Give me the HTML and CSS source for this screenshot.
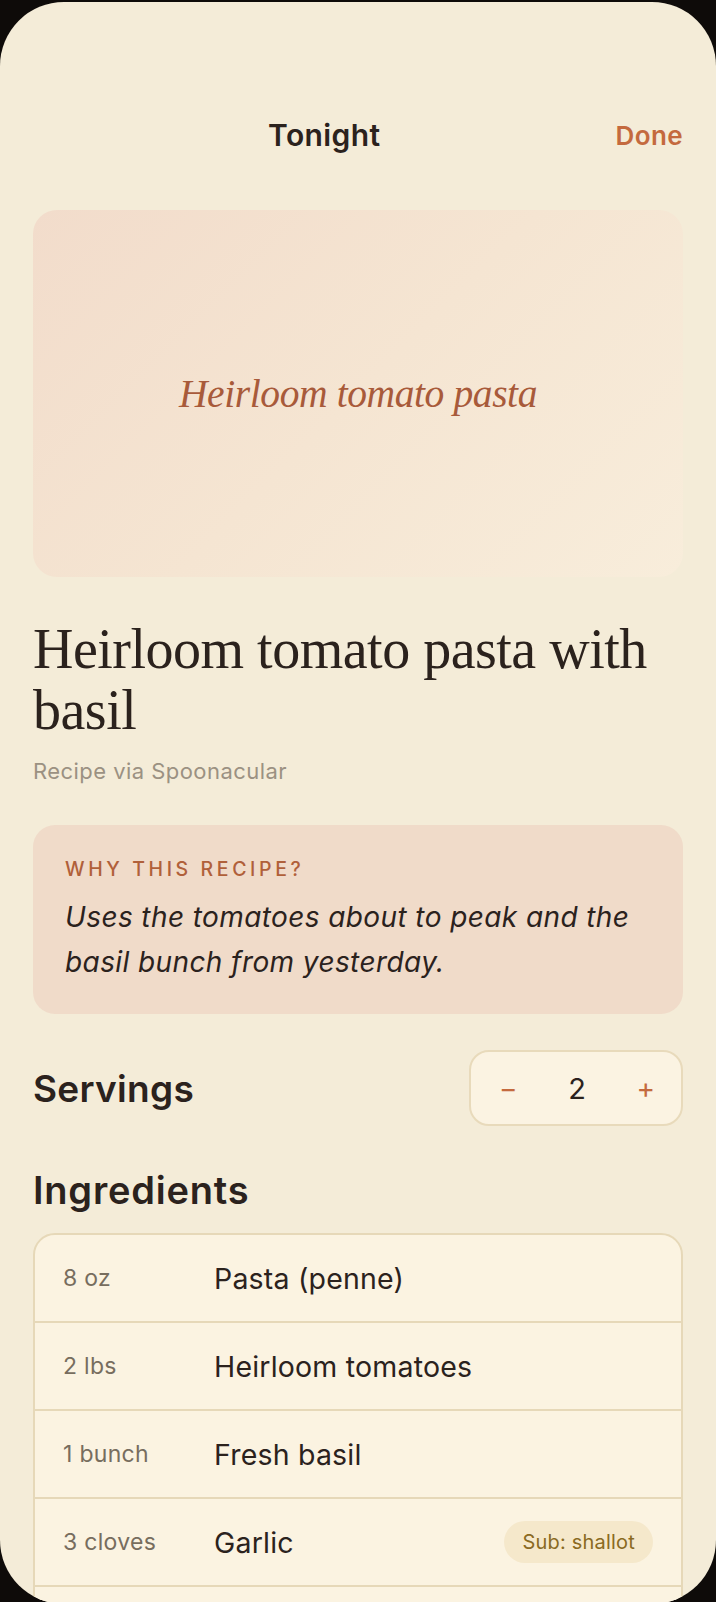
FILE: index.html
```html
<!DOCTYPE html>
<html lang="en">
<head>
  <meta charset="UTF-8" />
  <meta name="viewport" content="width=device-width, initial-scale=1.0">
  <title>Tonight</title>
  <link rel="stylesheet" href="styles.css">
</head>
<body>
  <div class="screen">

    <!-- Top bar -->
    <div class="topbar">
      <div class="topbar-title">Tonight</div>
      <button class="done-btn">Done</button>
    </div>

    <!-- Hero -->
    <div class="hero">
      <span class="hero-label">Heirloom tomato pasta</span>
    </div>

    <h1 class="recipe-title">Heirloom tomato pasta with basil</h1>
    <div class="recipe-source">Recipe via Spoonacular</div>

    <!-- Why card -->
    <div class="why-card">
      <div class="why-label">Why this recipe?</div>
      <p class="why-text">Uses the tomatoes about to peak and the basil bunch from yesterday.</p>
    </div>

    <!-- Servings -->
    <div class="servings-row">
      <h2 class="section-title">Servings</h2>
      <div class="stepper">
        <button class="step-btn">&minus;</button>
        <span class="step-value">2</span>
        <button class="step-btn">+</button>
      </div>
    </div>

    <h2 class="section-title ingredients-title">Ingredients</h2>

    <div class="ingredients">
      <div class="ing-row">
        <span class="ing-qty">8 oz</span>
        <span class="ing-name">Pasta (penne)</span>
      </div>
      <div class="ing-row">
        <span class="ing-qty">2 lbs</span>
        <span class="ing-name">Heirloom tomatoes</span>
      </div>
      <div class="ing-row">
        <span class="ing-qty">1 bunch</span>
        <span class="ing-name">Fresh basil</span>
      </div>
      <div class="ing-row">
        <span class="ing-qty">3 cloves</span>
        <span class="ing-name">Garlic</span>
        <span class="sub-badge">Sub: shallot</span>
      </div>
      <!-- next row scrolls below the fold -->
      <div class="ing-row"></div>
    </div>

  </div>
</body>
</html>
```

FILE: styles.css
```css
html, body {
  margin: 0;
  height: 100%;
  overflow: hidden;
  background: #0e0b09;
  font-family: 'Inter', 'Noto Sans', sans-serif;
  color: #2b221d;
}

.screen {
  box-sizing: border-box;
  height: 1602px;
  margin-top: 2px;
  padding: 105px 33px 0;
  background: #f4ecd8;
  border-radius: 64px;
  overflow: hidden;
}

/* TOP BAR */
.topbar {
  display: flex;
  align-items: center;
  height: 56px;
  margin-bottom: 47px;
}

.topbar-title {
  flex: 1;
  text-align: center;
  font-size: 30px;
  font-weight: 600;
  letter-spacing: 0.4px;
}

button {
  background: none;
  border: none;
  padding: 0;
  font-family: inherit;
  cursor: pointer;
}

.done-btn {
  font-size: 26px;
  font-weight: 600;
  letter-spacing: 0.4px;
  color: #c46a3e;
}

/* HERO */
.hero {
  height: 367px;
  border-radius: 24px;
  background: linear-gradient(135deg, #f2dccb 0%, #f5e5d2 50%, #f8eddb 100%);
  display: flex;
  align-items: center;
  justify-content: center;
}

.hero-label {
  font-family: 'Liberation Serif', serif;
  font-style: italic;
  font-size: 39.5px;
  color: #a85a3a;
  letter-spacing: -0.4px;
}

/* TITLE */
.recipe-title {
  margin: 42px 0 0;
  font-family: 'Liberation Serif', serif;
  font-weight: 400;
  font-size: 56px;
  line-height: 61px;
  letter-spacing: -0.5px;
  color: #2b221d;
}

.recipe-source {
  margin-top: 17px;
  font-size: 22px;
  letter-spacing: 0.45px;
  color: #9b9182;
}

/* WHY CARD */
.why-card {
  margin-top: 41px;
  padding: 32px 32px 29px;
  border-radius: 22px;
  background: #f0dbc9;
}

.why-label {
  font-size: 19.5px;
  font-weight: 500;
  letter-spacing: 3.6px;
  text-transform: uppercase;
  color: #b0603a;
}

.why-text {
  margin: 14px 0 0;
  font-size: 28px;
  font-style: italic;
  line-height: 45px;
  letter-spacing: 0.4px;
  color: #2b221d;
}

/* SERVINGS */
.servings-row {
  display: flex;
  align-items: center;
  justify-content: space-between;
  margin-top: 36px;
}

.section-title {
  margin: 0;
  font-size: 37px;
  font-weight: 600;
  letter-spacing: 0.3px;
}

.stepper {
  display: flex;
  align-items: center;
  justify-content: space-between;
  box-sizing: border-box;
  width: 214px;
  height: 76px;
  padding: 0 26px 0 28px;
  border: 2px solid #e8dabb;
  border-radius: 20px;
  background: #fbf3e2;
}

.step-btn {
  font-size: 28px;
  color: #c46a3e;
}

.step-value {
  font-size: 29px;
  color: #2b221d;
}

/* INGREDIENTS */
.ingredients-title {
  margin-top: 41px;
  font-size: 38px;
  letter-spacing: 0.8px;
}

.ingredients {
  margin-top: 20px;
  border: 2px solid #e6d8b8;
  border-radius: 22px;
  background: #fbf3e1;
}

.ing-row {
  display: flex;
  align-items: center;
  height: 86px;
  padding: 0 28px;
  border-top: 2px solid #e6d8b8;
}

.ing-row:first-child {
  border-top: none;
}

.ing-qty {
  width: 151px;
  font-size: 23px;
  letter-spacing: 0.3px;
  color: #776d5e;
}

.ing-name {
  flex: 1;
  font-size: 28.5px;
  letter-spacing: 0.2px;
  color: #2b221d;
}

.sub-badge {
  padding: 9px 18px;
  border-radius: 22px;
  background: #f5e8cb;
  font-size: 20px;
  letter-spacing: 0.2px;
  color: #8a6a22;
}
```
